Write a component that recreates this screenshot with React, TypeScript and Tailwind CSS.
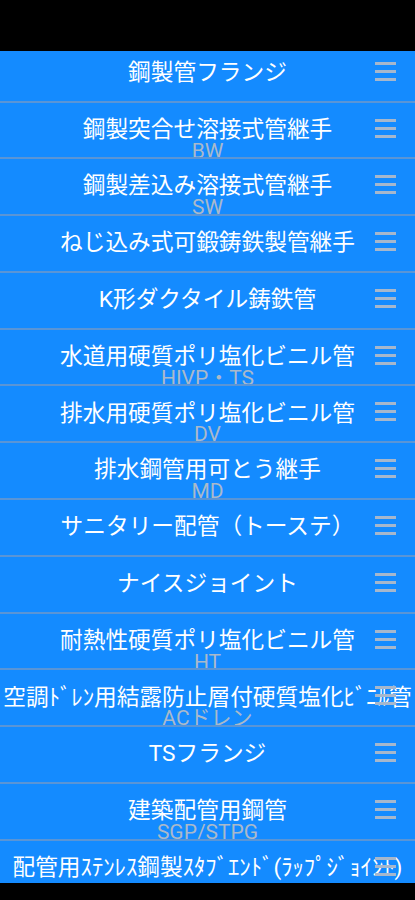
import React from "react";

type Item = { title: string; sub?: string };

const items: Item[] = [
  { title: "鋼製管フランジ" },
  { title: "鋼製突合せ溶接式管継手", sub: "BW" },
  { title: "鋼製差込み溶接式管継手", sub: "SW" },
  { title: "ねじ込み式可鍛鋳鉄製管継手" },
  { title: "K形ダクタイル鋳鉄管" },
  { title: "水道用硬質ポリ塩化ビニル管", sub: "HIVP・TS" },
  { title: "排水用硬質ポリ塩化ビニル管", sub: "DV" },
  { title: "排水鋼管用可とう継手", sub: "MD" },
  { title: "サニタリー配管（トーステ）" },
  { title: "ナイスジョイント" },
  { title: "耐熱性硬質ポリ塩化ビニル管", sub: "HT" },
  { title: "空調ﾄﾞﾚﾝ用結露防止層付硬質塩化ﾋﾞﾆﾙ管", sub: "ACドレン" },
  { title: "TSフランジ" },
  { title: "建築配管用鋼管", sub: "SGP/STPG" },
  { title: "配管用ｽﾃﾝﾚｽ鋼製ｽﾀﾌﾞｴﾝﾄﾞ(ﾗｯﾌﾟｼﾞｮｲﾝﾄ)" },
];

function Handle() {
  return (
    <div className="absolute right-[19px] top-[16px] flex flex-col gap-[5px]">
      <div className="h-[3px] w-[21px] bg-[#a6b7cc]" />
      <div className="h-[3px] w-[21px] bg-[#a6b7cc]" />
      <div className="h-[3px] w-[21px] bg-[#a6b7cc]" />
    </div>
  );
}

function Row({ item }: { item: Item }) {
  return (
    <div className="relative h-[56.8px] shrink-0 border-b-2 border-[#5a95d6] bg-[#148bff] overflow-hidden">
      <div className="flex h-full items-center justify-center whitespace-nowrap text-[22.7px] leading-none text-white [font-family:Roboto,'Noto_Sans_CJK_JP',sans-serif]">
        <span className="shrink-0">{item.title}</span>
      </div>
      {item.sub && (
        <div className="absolute left-0 right-0 top-[38px] text-center text-[21px] leading-[21px] text-[#aab9ca] whitespace-nowrap [font-family:Roboto,'Noto_Sans_CJK_JP',sans-serif]">
          {item.sub}
        </div>
      )}
      <Handle />
    </div>
  );
}

export default function App() {
  return (
    <div className="flex h-[900px] w-[415px] flex-col overflow-hidden bg-black">
      <div className="h-[51px] shrink-0 bg-black" />
      <div className="min-h-0 flex-1 overflow-hidden">
        <div className="mt-[-5.3px] flex flex-col">
          {items.map((it, i) => (
            <Row key={i} item={it} />
          ))}
        </div>
      </div>
      <div className="h-[17px] shrink-0 bg-black" />
    </div>
  );
}
